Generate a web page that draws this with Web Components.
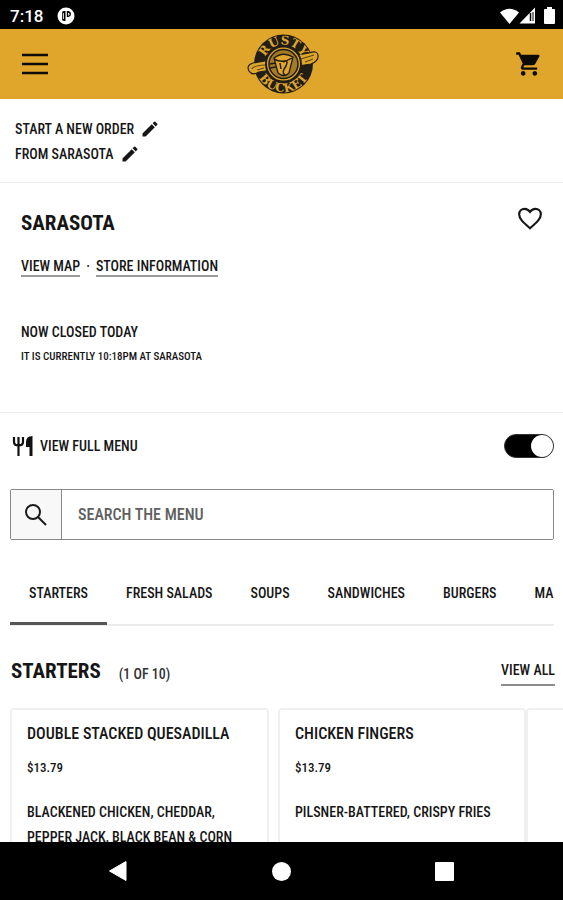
<!DOCTYPE html>
<html lang="en">
<head>
<meta charset="utf-8">
<meta name="viewport" content="width=device-width, initial-scale=1">
<title>Rusty Bucket - Sarasota</title>
<style>
  body {
    margin: 0;
    background: #fff;
    color: #161616;
    font-family: "Roboto Condensed", "Liberation Sans Narrow", "Liberation Sans", Arial, sans-serif;
    font-weight: 500;
    --fs-xs: 11px;
    --fs-sm: 13px;
    --fs-md: 14px;
    --fs-lg: 16px;
    --fs-xl: 21px;
    --gold: #dfa62b;
    --line: #ececec;
  }
</style>
</head>
<body>
<rb-app></rb-app>

<script>
/** Shared helper: opens a shadow root and fills it */
class RbElement extends HTMLElement {
  constructor() {
    super();
    this.attachShadow({ mode: 'open' });
  }

  connectedCallback() {
    this.shadowRoot.innerHTML = `
      <style>
        :host { display: block; box-sizing: border-box; }
        *, *::before, *::after { box-sizing: border-box; }
        h1, h2, h3, p { margin: 0; }
        button { font: inherit; color: inherit; background: none; border: 0; padding: 0; cursor: pointer; }
        a { color: inherit; text-decoration: none; }
        svg { display: block; }
      </style>
      ${this.template()}
    `;
  }

  template() { return ''; }
}

/** Device status bar */
class RbStatusBar extends RbElement {
  template() {
    return `
      <style>
        :host { display: flex; align-items: center; height: 29px; padding: 2px 8px 0 10px; background: #000; color: #fff; font-family: Roboto, sans-serif; font-size: 17px; font-weight: 500; }
        .notif { margin-left: 14px; }
        .icons { display: flex; align-items: center; margin-left: auto; }
        .battery { margin-left: 8px; }
      </style>
      <span>7:18</span>
      <svg class="notif" width="18" height="18" viewBox="0 0 18 18">
        <circle cx="9" cy="9" r="8.500" fill="#fff"/>
        <path d="M5 12V6Q5 4 7 4H8.500V14H7Q5 14 5 12Z" fill="#000"/>
        <path d="M9.800 4H11.500Q14 4.500 14 7T11.500 10H9.800Z" fill="#000"/>
        <path d="M6.300 6V12M11 6.500H12V8H11" fill="none" stroke="#fff"/>
      </svg>
      <div class="icons">
        <svg width="19" height="16" viewBox="0 0 19 16"><path d="M0 4.500Q9.500-3 19 4.500L9.500 16Z" fill="#fff"/></svg>
        <svg width="17" height="17" viewBox="0 0 17 17">
          <path d="M16 0.500V16.500H0.500Z" fill="#fff"/>
          <path d="M11.500 6V14" stroke="#000" stroke-width="1.500"/>
          <path d="M14 5V14" stroke="#000" stroke-width="1"/>
        </svg>
        <svg class="battery" width="11" height="17" viewBox="0 0 11 17"><path d="M3 0H8V2H10Q11 2 11 3V16Q11 17 10 17H1Q0 17 0 16V3Q0 2 1 2H3Z" fill="#fff"/></svg>
      </div>
    `;
  }
}

/** Gold header with menu, logo and cart */
class RbHeader extends RbElement {
  template() {
    return `
      <style>
        :host { display: grid; grid-template-columns: 1fr auto 1fr; align-items: center; height: 70px; padding: 0 20px 0 22px; background: var(--gold); color: #0d0b08; }
        .cart { justify-self: end; }
        .menu { justify-self: start; }
      </style>
      <button class="menu" aria-label="Menu">
        <svg width="26" height="24" viewBox="0 0 26 24"><path d="M0 3H26M0 12H26M0 21H26" stroke="currentColor" stroke-width="2.600"/></svg>
      </button>
      <a href="#" aria-label="Rusty Bucket home">
        <svg width="72" height="62" viewBox="0 0 72 62" font-family="DejaVu Serif, Liberation Serif, serif" font-weight="700">
          <defs>
            <path id="top" d="M17 31A19.500 19.500 0 0 1 56 31"/>
            <path id="bottom" d="M8.500 31A28 28 0 0 0 64.500 31"/>
          </defs>
          <circle cx="36.500" cy="31" r="29.500" fill="#211d17"/>
          <path d="M2 38Q-1 32 6 30L62 20Q70 17 71 22Q72 28 64 31L12 39Q5 43 2 38Z" fill="#dfa62b" stroke="#211d17" stroke-width="1.200"/>
          <path d="M5 36Q5 33 18 32M10 37L17 35M54 26L67 22M58 29L66 26" fill="none" stroke="#5d471b" stroke-width="1.200"/>
          <circle cx="36.500" cy="31" r="17.500" fill="#dfa62b" stroke="#211d17" stroke-width="2"/>
          <circle cx="36.500" cy="31" r="14.500" fill="#a37a26" stroke="#211d17" stroke-width="1.500"/>
          <path d="M27 25Q36 18 46 24L42 40Q37 45 31 40Z" fill="#dfa62b" stroke="#211d17" stroke-width="1.300"/>
          <path d="M27 26Q36 31 45 25M36 29Q42 26 39 33Q34 40 38 42M33 30L34 36M23 31L29 30M23 35L29 34" fill="none" stroke="#211d17" stroke-width="1.500"/>
          <g fill="#dfa62b" text-anchor="middle" font-size="12">
            <text><textPath href="#top" startOffset="50%">RUSTY</textPath></text>
            <text><textPath href="#bottom" startOffset="50%">BUCKET</textPath></text>
          </g>
        </svg>
      </a>
      <button class="cart" aria-label="Cart">
        <svg width="28" height="28" viewBox="0 0 24 24" fill="currentColor"><path d="M7 18c-1.100 0-1.990.9-1.990 2S5.900 22 7 22s2-.9 2-2-.9-2-2-2zM1 2v2h2l3.600 7.590-1.350 2.450c-.16.28-.25.61-.25.96 0 1.100.9 2 2 2h12v-2H7.420c-.14 0-.25-.11-.25-.25l.03-.12.900-1.630h7.450c.75 0 1.410-.41 1.750-1.030l3.580-6.490A1 1 0 0 0 20 4H5.210l-.94-2H1zm16 16c-1.100 0-1.990.9-1.990 2s.89 2 1.990 2 2-.9 2-2-.9-2-2-2z"/></svg>
      </button>
    `;
  }
}

/** One editable line of the order summary */
class RbOrderLine extends RbElement {
  template() {
    return `
      <style>
        button { display: flex; align-items: center; gap: 6px; height: 25px; font-size: var(--fs-md); }
      </style>
      <button>
        <slot></slot>
        <svg width="20" height="20" viewBox="0 0 24 24" fill="currentColor"><path d="M3 17.250V21h3.750L17.810 9.940l-3.750-3.750L3 17.250zM20.710 7.040a1 1 0 0 0 0-1.410l-2.340-2.340a1 1 0 0 0-1.410 0l-1.830 1.830 3.750 3.750 1.830-1.830z"/></svg>
      </button>
    `;
  }
}

/** Store name, links and opening state */
class RbStore extends RbElement {
  template() {
    return `
      <style>
        :host { height: 230px; padding: 20px 20px 20px 21px; border-bottom: 1px solid var(--line); }
        .top { display: flex; justify-content: space-between; align-items: center; height: 40px; }
        h1 { font-size: var(--fs-xl); line-height: 40px; }
        .top svg { margin-top: -10px; }
        .links { display: flex; gap: 6px; height: 50px; margin-top: 14px; font-size: var(--fs-md); line-height: 18px; }
        .links a { height: 20px; border-bottom: 2px solid #999; }
        .state { margin-top: 13px; font-size: var(--fs-md); line-height: 24px; }
        .now { font-size: var(--fs-xs); line-height: 26px; }
      </style>
      <div class="top">
        <h1>SARASOTA</h1>
        <button aria-label="Add to favorites">
          <svg width="26" height="26" viewBox="0 0 24 24" fill="none" stroke="currentColor" stroke-width="2"><path d="M12 21.500C5 15.500 2 12.500 2 8.500 2 5.500 4.300 3.500 7 3.500c2 0 3.800 1 5 2.800 1.200-1.800 3-2.800 5-2.800 2.700 0 5 2 5 5 0 4-3 7-10 13z"/></svg>
        </button>
      </div>
      <div class="links"><a href="#">VIEW MAP</a><span>·</span><a href="#">STORE INFORMATION</a></div>
      <p class="state">NOW CLOSED TODAY</p>
      <p class="now">IT IS CURRENTLY 10:18PM AT SARASOTA</p>
    `;
  }
}

/** Full menu switch */
class RbMenuSwitch extends RbElement {
  template() {
    return `
      <style>
        label { display: flex; align-items: center; gap: 6px; height: 24px; padding-left: 2px; font-size: var(--fs-md); }
        input { appearance: none; display: flex; width: 50px; height: 24px; margin: 0 0 0 auto; border: 1px solid #333; border-radius: 12px; background: #000; }
        input::before { content: ""; width: 22px; height: 22px; border-radius: 50%; background: #fff; }
        input:checked { justify-content: flex-end; }
      </style>
      <label>
        <svg width="22" height="21" viewBox="0 0 22 21">
          <path d="M2 1V6Q2 9.500 6.500 9.500Q11 9.500 11 6V1M6.500 1V20" fill="none" stroke="#111" stroke-width="2.200"/>
          <path d="M20.500 0V20H17.500V11H14V6Q14 0 20.500 0Z" fill="#111"/>
        </svg>
        VIEW FULL MENU
        <input type="checkbox" role="switch" checked>
      </label>
    `;
  }
}

/** Search field with a leading icon */
class RbSearch extends RbElement {
  template() {
    return `
      <style>
        form { display: flex; height: 51px; border: 1px solid #888; border-radius: 2px; overflow: hidden; }
        button { display: grid; place-items: center; width: 51px; border-right: 1px solid #888; background: #f8f8f8; }
        input { flex: 1; min-width: 0; border: 0; padding: 0 16px; background: #fff; font: inherit; font-size: var(--fs-lg); color: inherit; outline: 0; }
        input::placeholder { color: #5f5f5f; opacity: 1; }
      </style>
      <form>
        <button type="button" aria-label="Search">
          <svg width="24" height="24" viewBox="0 0 24 24" fill="none" stroke="#1c1c1c" stroke-width="2"><circle cx="9" cy="9" r="7"/><path d="M14 14L22 22"/></svg>
        </button>
        <input type="text" placeholder="SEARCH THE MENU" aria-label="Search the menu">
      </form>
    `;
  }
}

class RbTabs extends RbElement {
  template() {
    const tabs = ['STARTERS', 'FRESH SALADS', 'SOUPS', 'SANDWICHES', 'BURGERS', 'MA'];
    return `
      <style>
        nav { display: flex; height: 66px; box-shadow: inset 0 -2px var(--line); overflow: hidden; }
        button { flex: none; height: 65px; padding: 3px 19px 0; font-size: var(--fs-md); border-bottom: 3px solid transparent; }
        .on { border-color: #555; }
      </style>
      <nav>${tabs.map((t, i) => `<button class="${i === 0 ? 'on' : ''}">${t}</button>`).join('')}</nav>
    `;
  }
}

/** Menu item card: slots for name, price and description */
class RbItemCard extends RbElement {
  template() {
    return `
      <style>
        :host { flex: none; height: 200px; padding: 8px 15px; border: 2px solid #f0f0f0; border-radius: 4px; }
        h3 { font-size: var(--fs-lg); font-weight: 500; line-height: 32px; }
        .price { margin-top: 4px; font-size: var(--fs-sm); line-height: 28px; }
        .desc { margin-top: 18px; font-size: var(--fs-md); line-height: 25px; }
      </style>
      <h3><slot name="name"></slot></h3>
      <p class="price"><slot name="price"></slot></p>
      <p class="desc"><slot></slot></p>
    `;
  }
}

/** Category section with its row of cards */
class RbSection extends RbElement {
  template() {
    return `
      <style>
        header { display: flex; align-items: center; height: 46px; padding: 0 8px 0 1px; }
        h2 { font-size: var(--fs-xl); line-height: 46px; }
        .count { margin: 6px 0 0 18px; font-size: var(--fs-md); line-height: 20px; color: #333; }
        a { margin-left: auto; padding: 3px 0; border-bottom: 2px solid #8c8c8c; font-size: var(--fs-md); line-height: 22px; }
        .row { display: flex; margin-top: 14px; overflow: hidden; }
        rb-item-card { width: 248px; }
        rb-item-card:first-child { width: 259px; margin-right: 9px; }
      </style>
      <header>
        <h2>STARTERS</h2>
        <span class="count">(1 OF 10)</span>
        <a href="#">VIEW ALL</a>
      </header>
      <div class="row">
        <rb-item-card>
          <span slot="name">DOUBLE STACKED QUESADILLA</span>
          <span slot="price">$13.79</span>
          BLACKENED CHICKEN, CHEDDAR, PEPPER JACK, BLACK BEAN &amp; CORN
        </rb-item-card>
        <rb-item-card>
          <span slot="name">CHICKEN FINGERS</span>
          <span slot="price">$13.79</span>
          PILSNER-BATTERED, CRISPY FRIES
        </rb-item-card>
        <rb-item-card></rb-item-card>
      </div>
    `;
  }
}

/** Android navigation bar */
class RbNavBar extends RbElement {
  template() {
    return `
      <style>
        :host { display: flex; align-items: center; justify-content: center; gap: 144px; height: 58px; background: #000; }
      </style>
      <button aria-label="Back"><svg width="19" height="22" viewBox="0 0 19 22"><path d="M17 1.500V20.500L0.500 11Z" fill="#fff" stroke="#fff" stroke-linejoin="round"/></svg></button>
      <button aria-label="Home"><svg width="19" height="19" viewBox="0 0 19 19"><circle cx="9.500" cy="9.500" r="9.500" fill="#fff"/></svg></button>
      <button aria-label="Recent apps"><svg width="19" height="19" viewBox="0 0 19 19"><rect width="19" height="19" rx="1" fill="#fff"/></svg></button>
    `;
  }
}

/** App shell */
class RbApp extends RbElement {
  template() {
    return `
      <style>
        :host { display: flex; flex-direction: column; height: 100vh; }
        rb-status-bar, rb-header, rb-nav-bar { flex: none; }
        main { flex: 1; min-height: 0; overflow: hidden; }
        .order { height: 84px; padding: 17px 15px 0; border-bottom: 1px solid var(--line); }
        .menu { padding: 21px 0 0 10px; }
        rb-menu-switch, rb-search, rb-tabs { margin-right: 9px; }
        rb-search { margin-top: 31px; }
        rb-tabs { margin-top: 20px; }
        rb-section { margin-top: 22px; }
      </style>
      <rb-status-bar></rb-status-bar>
      <rb-header></rb-header>
      <main>
        <div class="order">
          <rb-order-line>START A NEW ORDER</rb-order-line>
          <rb-order-line>FROM SARASOTA</rb-order-line>
        </div>
        <rb-store></rb-store>
        <div class="menu">
          <rb-menu-switch></rb-menu-switch>
          <rb-search></rb-search>
          <rb-tabs></rb-tabs>
          <rb-section></rb-section>
        </div>
      </main>
      <rb-nav-bar></rb-nav-bar>
    `;
  }
}

customElements.define('rb-status-bar', RbStatusBar);
customElements.define('rb-header', RbHeader);
customElements.define('rb-order-line', RbOrderLine);
customElements.define('rb-store', RbStore);
customElements.define('rb-menu-switch', RbMenuSwitch);
customElements.define('rb-search', RbSearch);
customElements.define('rb-tabs', RbTabs);
customElements.define('rb-item-card', RbItemCard);
customElements.define('rb-section', RbSection);
customElements.define('rb-nav-bar', RbNavBar);
customElements.define('rb-app', RbApp);
</script>
</body>
</html>
